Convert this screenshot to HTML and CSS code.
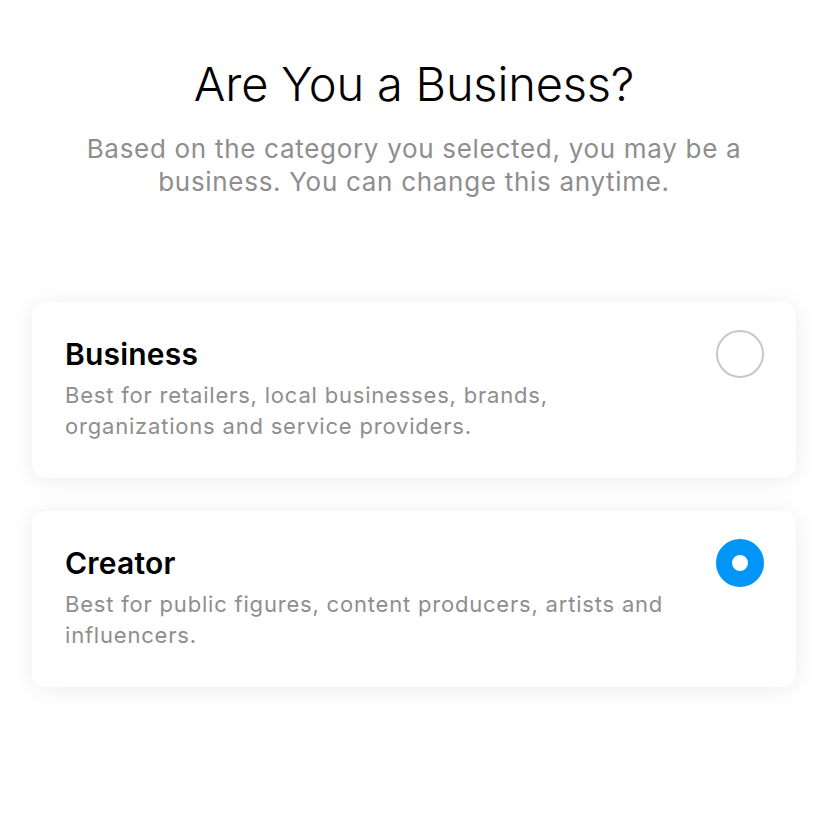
FILE: index.html
```html
<!DOCTYPE html>
<html>
<head>
<meta charset="utf-8">
<link rel="stylesheet" href="styles.css">
</head>
<body>
<main class="page">
  <header class="intro">
    <h1 class="title">Are You a Business?</h1>
    <p class="subtitle">Based on the category you selected, you may be a business. You can change this anytime.</p>
  </header>
  <section class="options">
    <div class="card">
      <div class="card-text">
        <h2 class="card-title">Business</h2>
        <p class="card-desc">Best for retailers, local businesses, brands, organizations and service providers.</p>
      </div>
      <span class="radio"></span>
    </div>
    <div class="card">
      <div class="card-text">
        <h2 class="card-title">Creator</h2>
        <p class="card-desc">Best for public figures, content producers, artists and influencers.</p>
      </div>
      <span class="radio radio-on"></span>
    </div>
  </section>
</main>
</body>
</html>
```

FILE: styles.css
```css
* { box-sizing: border-box; }
html, body {
  margin: 0;
  background: #ffffff;
  font-family: Inter, "Noto Sans", sans-serif;
}
.page {
  width: 828px;
  height: 828px;
  padding: 55px 32px 0;
}
.intro {
  text-align: center;
}
.title {
  margin: 0;
  font-size: 47px;
  line-height: 58px;
  font-weight: 300;
  color: #000;
  letter-spacing: -0.2px;
}
.subtitle {
  margin: 19px auto 0;
  width: 720px;
  font-size: 26px;
  line-height: 33px;
  color: #8e8e8e;
  font-weight: 400;
  letter-spacing: 0.7px;
}
.options {
  margin-top: 104px;
  display: flex;
  flex-direction: column;
  gap: 33px;
}
.card {
  background: #fff;
  border-radius: 14px;
  box-shadow: 0 2px 24px rgba(0,0,0,0.08);
  height: 176px;
  padding: 34px 32px 0 33px;
  display: flex;
  justify-content: space-between;
  align-items: flex-start;
}
.card-title {
  margin: 0;
  font-size: 30px;
  line-height: 36px;
  font-weight: 600;
  color: #000;
  letter-spacing: 0.2px;
}
.card-desc {
  margin: 8px 0 0;
  width: 640px;
  font-size: 22px;
  line-height: 31px;
  color: #8e8e8e;
  letter-spacing: 0.8px;
}
.radio {
  flex: none;
  width: 48px;
  height: 48px;
  border-radius: 50%;
  border: 2.5px solid #c7c7c7;
  margin-top: -6px;
}
.radio-on {
  border: 16px solid #0095f6;
  background: #fff;
}
```
